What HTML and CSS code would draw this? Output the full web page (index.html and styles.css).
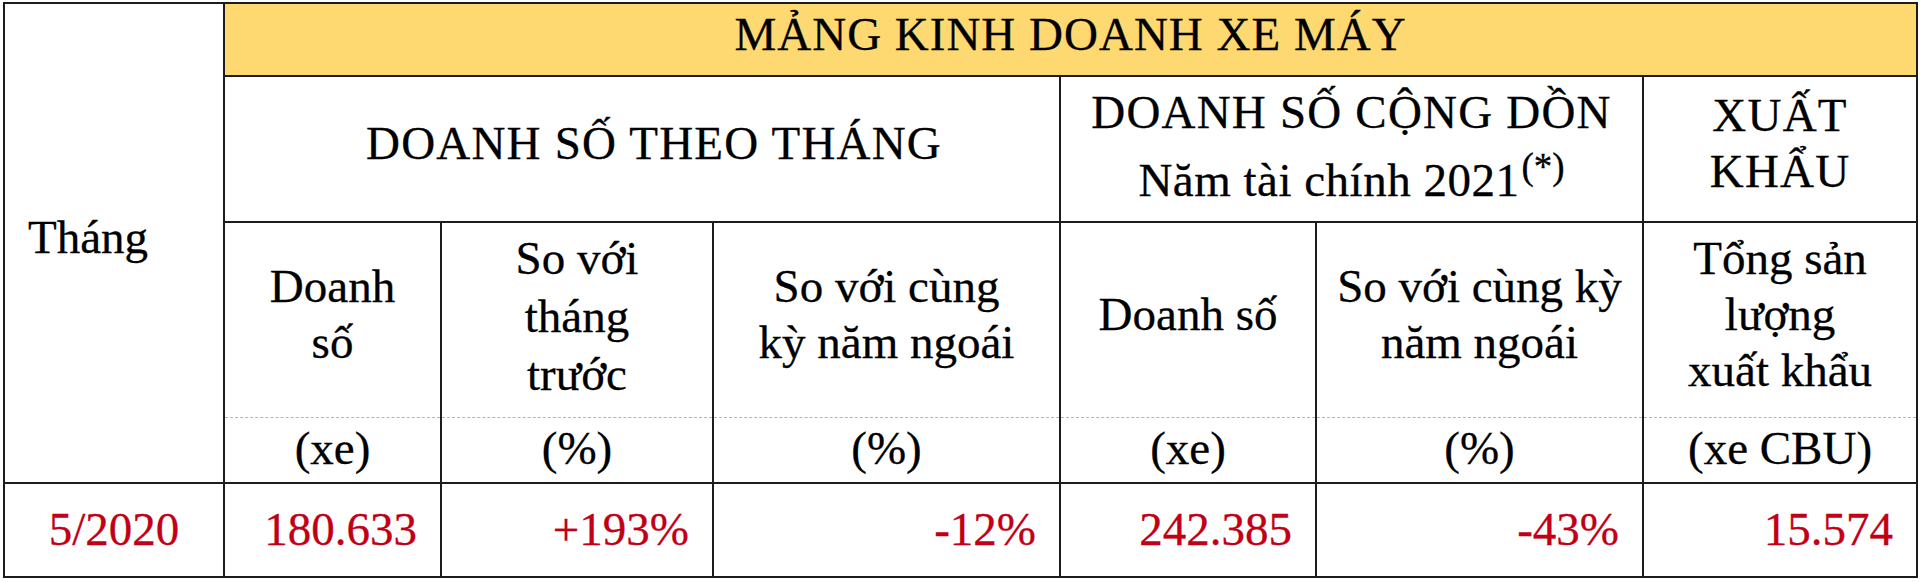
FILE: index.html
```html
<!DOCTYPE html>
<html lang="vi">
<head>
<meta charset="utf-8">
<title>Mảng kinh doanh xe máy</title>
<link rel="stylesheet" href="styles.css">
</head>
<body>
<table class="sales">
  <colgroup>
    <col class="c1"><col class="c2"><col class="c3"><col class="c4"><col class="c5"><col class="c6"><col class="c7">
  </colgroup>
  <tr class="r1">
    <td class="month-head" rowspan="4">Tháng</td>
    <td class="title caps" colspan="6">MẢNG KINH DOANH XE MÁY</td>
  </tr>
  <tr class="r2">
    <td class="caps monthly" colspan="3">DOANH SỐ THEO THÁNG</td>
    <td class="group" colspan="2"><span class="caps">DOANH SỐ CỘNG DỒN</span><br><span class="fy">Năm tài chính 2021</span><sup>(*)</sup></td>
    <td class="caps">XUẤT<br>KHẨU</td>
  </tr>
  <tr class="r3">
    <td>Doanh<br>số</td>
    <td class="three">So với<br>tháng<br>trước</td>
    <td>So với cùng<br>kỳ năm ngoái</td>
    <td>Doanh số</td>
    <td>So với cùng kỳ<br>năm ngoái</td>
    <td>Tổng sản<br>lượng<br>xuất khẩu</td>
  </tr>
  <tr class="r4">
    <td>(xe)</td>
    <td>(%)</td>
    <td>(%)</td>
    <td>(xe)</td>
    <td>(%)</td>
    <td>(xe CBU)</td>
  </tr>
  <tr class="r5">
    <td class="month">5/2020</td>
    <td class="num">180.633</td>
    <td class="num">+193%</td>
    <td class="num">-12%</td>
    <td class="num">242.385</td>
    <td class="num">-43%</td>
    <td class="num">15.574</td>
  </tr>
</table>
</body>
</html>
```

FILE: styles.css
```css
html, body {
  margin: 0;
  padding: 0;
  background: #ffffff;
}

.sales {
  margin: 2px 0 0 3px;
  width: 1915px;
  table-layout: fixed;
  border-collapse: collapse;
  font-family: "Liberation Serif", "Times New Roman", serif;
  font-size: 47px;
  line-height: 56px;
  color: #000;
  -webkit-text-stroke: 0.3px currentColor;
}

.c1 { width: 220px; }
.c2 { width: 217px; }
.c3 { width: 272px; }
.c4 { width: 347px; }
.c5 { width: 256px; }
.c6 { width: 327px; }
.c7 { width: 274px; }

.sales td {
  border: 2px solid #1c1c1c;
  text-align: center;
  vertical-align: middle;
  padding: 0 0 12px 0;
  white-space: nowrap;
}

.caps {
  letter-spacing: 1.2px;
}

.sales .title {
  background: #fed870;
  letter-spacing: 1px;
}

.sales .monthly {
  padding-left: 24px;
}

.r1 { height: 73px; }
.r2 { height: 146px; }
.r3 { height: 195px; }
.r4 { height: 66px; }
.r5 { height: 94px; }

.sales .month-head {
  text-align: left;
  padding-left: 23px;
  padding-bottom: 12px;
}

.sales .group {
  line-height: 68px;
  padding-bottom: 6px;
}

.fy {
  letter-spacing: 0.5px;
}

.group sup {
  font-size: 37px;
  line-height: 0;
  vertical-align: 17px;
  letter-spacing: 0;
  margin-left: 2px;
}

.sales .three {
  line-height: 58px;
  padding-bottom: 8px;
}

.sales .r3 td {
  border-bottom: 1px dashed #b4b4b4;
}

.sales .r4 td {
  border-top: 1px dashed #b4b4b4;
  padding-bottom: 4px;
}

.sales .r5 td {
  color: #c10016;
  padding-bottom: 2px;
}

.sales .r5 .num {
  text-align: right;
  padding-right: 23px;
}
```
